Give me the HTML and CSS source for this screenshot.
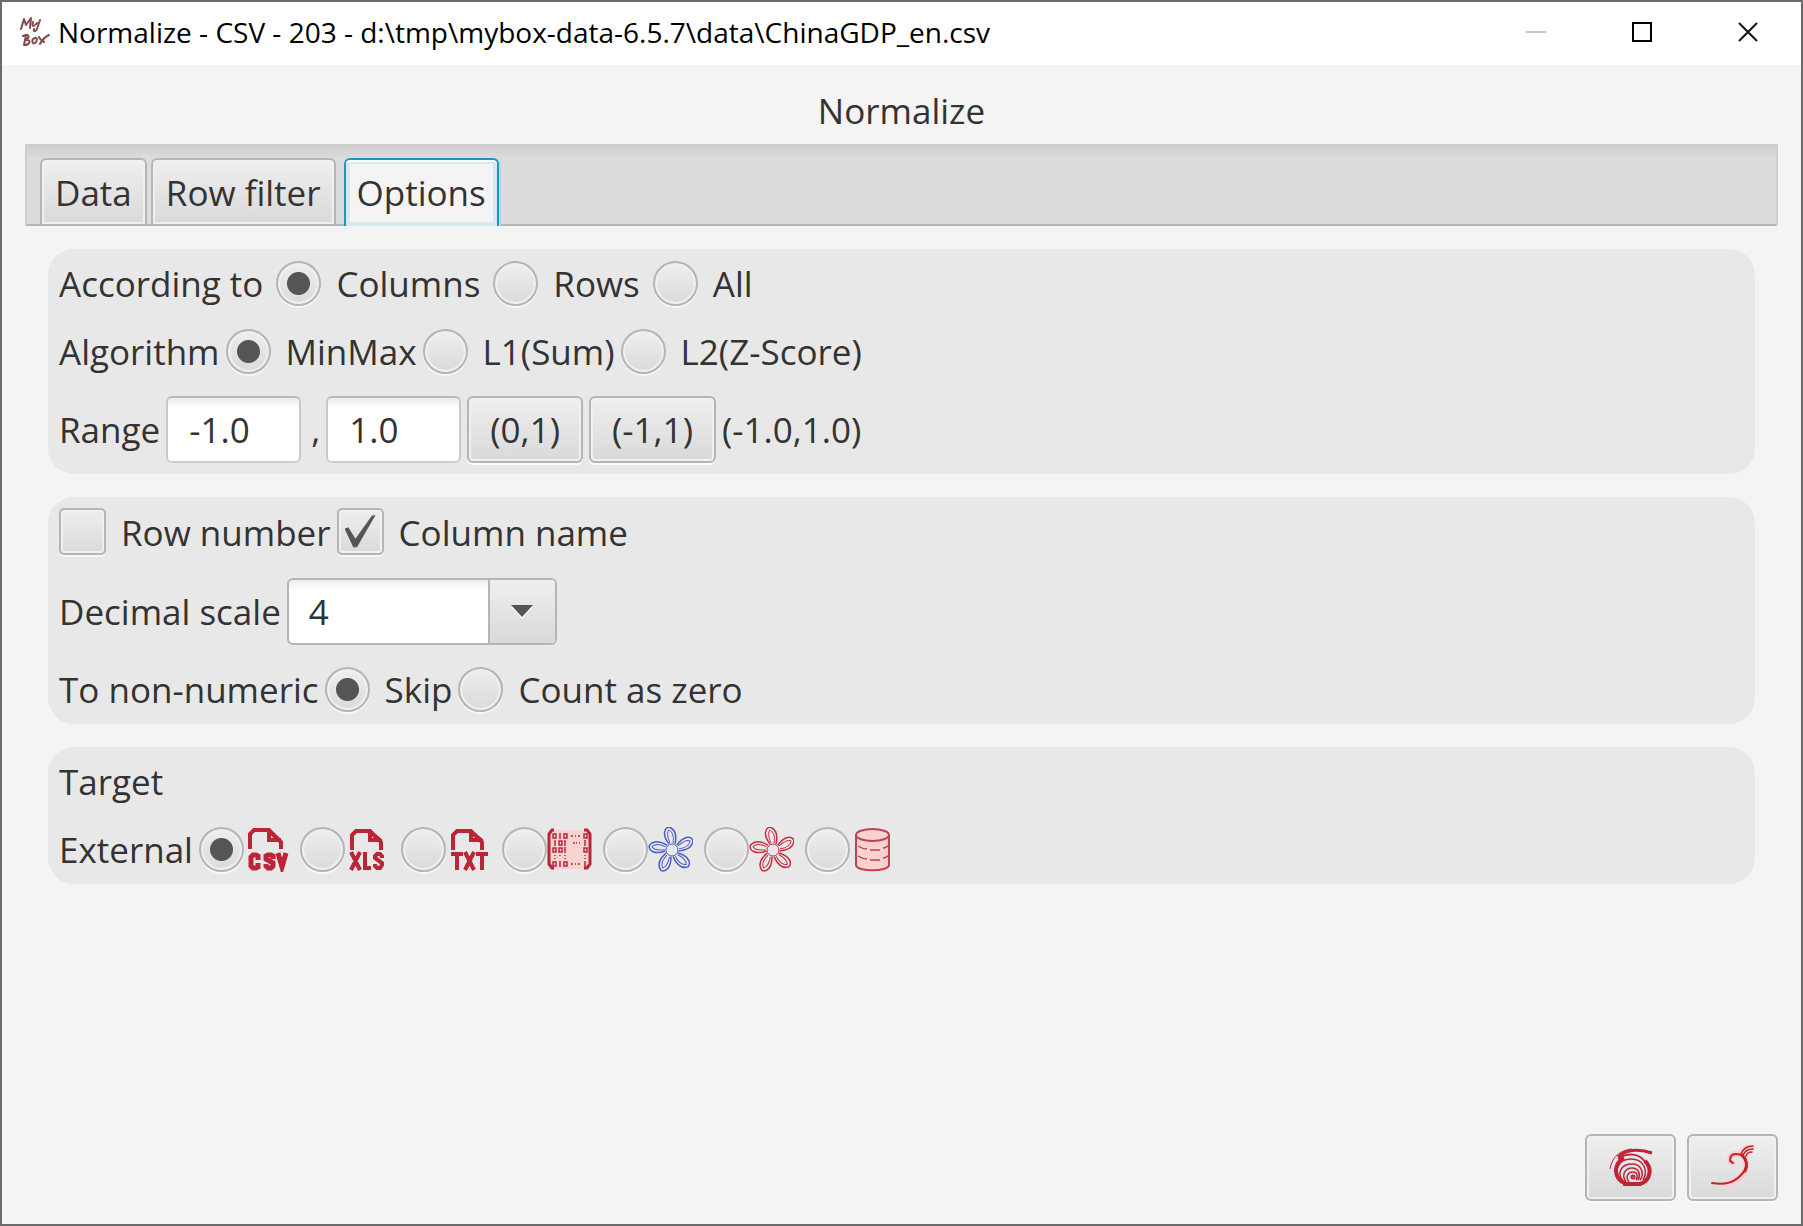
FILE: index.html
```html
<!DOCTYPE html>
<html lang="en">
<head>
<meta charset="utf-8">
<title>Normalize - CSV - 203</title>
<link rel="stylesheet" href="styles.css">
</head>
<body>
<div class="window">
  <header class="titlebar">
    <svg class="app-icon" viewBox="0 0 30 32" aria-hidden="true">
      <g fill="none" stroke="#83494b" stroke-width="2" stroke-linecap="round" stroke-linejoin="round">
        <path d="M1 13 4 3 6 9 11 2 10 12M13 6c-1 4 0 6 4 1M20 4l-3 9c-1 3-4 3-3 0"/>
        <path d="M6 19 4 29M3 20c7-3 7 2 2 4 7-1 5 5-1 5M15 22c-4 1-3 7 0 5s2-6 0-5M19 21c1 3 3 4 5 5M29 19c-4 2-7 5-9 9"/>
      </g>
    </svg>
    <span class="window-title">Normalize - CSV - 203 - d:\tmp\mybox-data-6.5.7\data\ChinaGDP_en.csv</span>
    <div class="window-controls">
      <button class="control" disabled aria-label="Minimize"><svg viewBox="0 0 20 20"><path d="M0 10h20" stroke="#c8c8c8" stroke-width="2"/></svg></button>
      <button class="control" aria-label="Maximize"><svg viewBox="0 0 20 20"><path d="M1 1h18v18H1z" fill="none" stroke="#000" stroke-width="2"/></svg></button>
      <button class="control" aria-label="Close"><svg viewBox="0 0 20 20"><path d="M1 1l18 18M19 1 1 19" stroke="#111" stroke-width="2"/></svg></button>
    </div>
  </header>

  <main class="content">
    <h1 class="heading">Normalize</h1>
    <div class="tabs" role="tablist">
      <button class="tab" role="tab">Data</button>
      <button class="tab" role="tab">Row filter</button>
      <button class="tab selected" role="tab" aria-selected="true">Options</button>
    </div>

    <div class="panels">
      <section class="panel">
        <div class="row wide">
          <span class="caption">According to</span>
          <label class="option"><input class="radio" type="radio" name="by" checked>Columns</label>
          <label class="option"><input class="radio" type="radio" name="by">Rows</label>
          <label class="option"><input class="radio" type="radio" name="by">All</label>
        </div>
        <div class="row">
          <span class="caption">Algorithm</span>
          <label class="option"><input class="radio" type="radio" name="algorithm" checked>MinMax</label>
          <label class="option"><input class="radio" type="radio" name="algorithm">L1(Sum)</label>
          <label class="option"><input class="radio" type="radio" name="algorithm">L2(Z-Score)</label>
        </div>
        <div class="row">
          <label for="from">Range</label>
          <input class="field" id="from" type="text" value="-1.0">
          <label class="comma" for="to">,</label>
          <input class="field" id="to" type="text" value="1.0">
          <button class="button">(0,1)</button>
          <button class="button">(-1,1)</button>
          <span>(-1.0,1.0)</span>
        </div>
      </section>

      <section class="panel">
        <div class="row">
          <label class="option"><input class="check" type="checkbox">Row number</label>
          <label class="option"><input class="check" type="checkbox" checked>Column name</label>
        </div>
        <div class="row">
          <label for="scale">Decimal scale</label>
          <div class="combo">
            <select id="scale"><option>4</option></select>
            <span class="arrow"><svg viewBox="0 0 22 14"><path d="M0 2h22L11 14z" fill="#fff"/><path d="M0 0h22L11 12z" fill="#555"/></svg></span>
          </div>
        </div>
        <div class="row">
          <span class="caption">To non-numeric</span>
          <label class="option"><input class="radio" type="radio" name="invalid" checked>Skip</label>
          <label class="option"><input class="radio" type="radio" name="invalid">Count as zero</label>
        </div>
      </section>

      <section class="panel">
        <div class="row">Target</div>
        <div class="row">
          <span class="caption">External</span>
          <label class="target"><input class="radio" type="radio" name="target" checked aria-label="CSV">
            <svg viewBox="0 0 45 45"><g fill="none" stroke="#be2438" stroke-width="4"><path d="M6 22V7l4-4h15l12 12v7"/><path d="M25 3v10h12M25 4l11 10" stroke-width="4"/><g stroke-width="5"><path d="M14 33v-4l-2-1H9l-2 2v9l2 2h3l2-1v-4M29 32v-3l-2-1h-3l-2 1v3l7 4v3l-2 2h-3l-2-2v-2M34 26l4 14 4-14"/></g></g></svg></label>
          <label class="target"><input class="radio" type="radio" name="target" aria-label="XLS">
            <svg viewBox="0 0 45 45"><g fill="none" stroke="#be2438" stroke-width="4"><path d="M7 23V8l4-4h14l11 11v8"/><path d="M25 4v9h11M25 5l11 9" stroke-width="4"/><path d="M6 25l9 18M15 25L6 43M20 25v16h6M37 31v-2l-2-2h-3l-2 2v2l7 5v2l-2 3h-3l-2-2v-2"/></g></svg></label>
          <label class="target"><input class="radio" type="radio" name="target" aria-label="TXT">
            <svg viewBox="0 0 45 45"><g fill="none" stroke="#be2438" stroke-width="4"><path d="M7 23V8l4-4h14l11 11v8"/><path d="M25 4v9h11M25 5l11 9" stroke-width="4"/><path d="M5 27h12M11 27v16M19 25l9 18M28 25l-9 18M30 27h12M36 27v16"/></g></svg></label>
          <label class="target"><input class="radio" type="radio" name="target" aria-label="Matrix">
            <svg viewBox="0 0 45 45"><path d="M1 3h42v39H1z" fill="#f9d3d0"/><g fill="none" stroke="#b5283a"><path d="M7 3H5L2 7v30l3 4h2M37 3h3l3 4v30l-3 4h-3" stroke-width="3"/><path stroke-width="1.500" d="M6 7h3v4H6zM13 6v6M17 7h3v4h-3zM24 9h2M28 9h1M31 9h2M37 7h3v4h-3zM8 13v6M12 14h3v4h-3zM18 13v6M26 16h2M29 16h1M32 16h1M38 13v6M6 21h3v4H6zM12 21h3v4h-3zM18 20v6M37 21h3v4h-3zM8 28v1M8 31v1M13 28v1M18 28v1M18 31v1M38 28v1M38 31v1M6 35h3v4H6zM13 34v6M17 35h3v4h-3zM24 37h2M28 37h1M31 37h2M38 34v6"/></g></svg></label>
          <label class="target"><input class="radio" type="radio" name="target" aria-label="Blue flower">
            <svg viewBox="0 0 45 45" color="#4c5fc9"><use href="#flower"/></svg></label>
          <label class="target"><input class="radio" type="radio" name="target" aria-label="Red flower">
            <svg viewBox="0 0 45 45" color="#c72c40"><use href="#flower"/></svg></label>
          <label class="target"><input class="radio" type="radio" name="target" aria-label="Database">
            <svg viewBox="0 0 45 45"><g fill="#fbd2cd" stroke="#bd4354" stroke-width="2"><path d="M6 8v30c0 7 33 7 33 0V8"/><ellipse cx="22.500" cy="8" rx="16.500" ry="6"/><path d="M8 19c3 2 6 3 9 3M20 23h10M33 21c2 0 3-1 5-2M8 29c3 2 6 3 9 3M20 33h10M33 31c2 0 3-1 5-2" fill="none" stroke-width="1.500"/></g></svg></label>
        </div>
      </section>
    </div>

    <footer class="actions">
      <button class="button action" aria-label="Shell">
        <svg viewBox="0 0 45 45"><g fill="none" stroke="#be2438"><path d="M2 24C4 12 12 5 24 4" stroke-width="1"/><path d="M10 12C17 5 30 3 44 8" stroke-width="3"/><path d="M37 16c8 8 5 20-5 23H18C5 34 5 18 16 13" stroke-width="4"/><path d="M10 14C19 7 32 8 38 18" stroke-width="2"/><path d="M12 35C5 25 11 14 23 14c12 0 18 11 12 21M15 36C8 27 14 19 24 19c9 0 13 9 8 16M18 37c-5-7-1-14 6-14 7 0 9 7 6 12M21 37c-4-5-1-10 4-10 5 0 5 5 3 8" stroke-width="1.500"/><circle cx="25" cy="32" r="1.500" stroke-width="2"/><path d="M15 39h18" stroke-width="4"/></g></svg>
      </button>
      <button class="button action" aria-label="Start">
        <svg viewBox="0 0 45 45"><g fill="none" stroke-linecap="round"><path d="M23 18c-5-2-3-9 3-9 12 0 14 14 4 23-5 4-9 6-14 7M31 9c2-4 6-7 11-7" stroke="#f9d0cc" stroke-width="6"/><path d="M2 38c13 2 21 0 28-7C40 22 38 9 26 9c-6 0-8 7-3 9" stroke="#c4202f" stroke-width="2"/><path d="M32 10c5 5 6 10 3 16" stroke="#c4202f" stroke-width="3"/><path d="M31 9c2-5 5-8 12-8M33 10c2-4 5-6 10-6M36 11c1-3 3-4 6-4" stroke="#c4202f" stroke-width="1.500"/></g></svg>
      </button>
    </footer>
  </main>
</div>

<svg class="defs" aria-hidden="true">
  <symbol id="flower" viewBox="0 0 45 45">
    <g fill="none" stroke="currentColor" stroke-width="1">
      <circle cx="24" cy="23" r="6"/>
      <g id="petal"><path d="M21 17C14 8 16 1 21 0c6 2 8 8 6 17" stroke-width="1.500"/><path d="M22 16c-3-7-3-11-1-13 4 2 5 7 4 13"/></g>
      <use href="#petal" transform="rotate(72 24 23)"/>
      <use href="#petal" transform="rotate(144 24 23)"/>
      <use href="#petal" transform="rotate(216 24 23)"/>
      <use href="#petal" transform="rotate(288 24 23)"/>
    </g>
  </symbol>
</svg>
</body>
</html>
```

FILE: styles.css
```css
* { box-sizing: border-box; }

body {
  margin: 0;
  font-family: "Open Sans", "Noto Sans", sans-serif;
  font-size: 35px;
  line-height: 46px;
  color: #333;
}

button, input, select { font: inherit; color: inherit; margin: 0; }

.window {
  display: flex;
  flex-direction: column;
  min-height: 100vh;
  border: 2px solid #6b6b6b;
  background: #f4f4f4;
}

.titlebar {
  display: flex;
  align-items: center;
  height: 63px;
  padding: 0 0 3px 18px;
  background: #fff;
  color: #000;
}
.app-icon { width: 30px; height: 32px; margin-right: 8px; }
.window-title { flex: 1; font-size: 28px; white-space: nowrap; }
.window-controls { display: flex; }
.control {
  display: flex;
  align-items: center;
  justify-content: center;
  width: 106px;
  height: 60px;
  padding: 0;
  border: 0;
  background: none;
}
.control svg { width: 20px; height: 20px; }

.content {
  display: flex;
  flex: 1;
  flex-direction: column;
  padding: 23px;
}
.heading {
  margin: 0 0 10px;
  font-size: inherit;
  font-weight: 400;
  text-align: center;
}

.tabs {
  display: flex;
  align-items: flex-end;
  gap: 4px;
  height: 82px;
  padding: 0 13px;
  border: solid #cfcfcf;
  border-width: 0 2px;
  background: linear-gradient(#b5b5b5, #b5b5b5) bottom / 100% 2px no-repeat,
    linear-gradient(#cbcbcb, #dcdcdc 14px);
}
.tab {
  height: 68px;
  padding: 2px 13px 0;
  border: 2px solid #b5b5b5;
  border-radius: 6px 6px 0 0;
  background: linear-gradient(#efefef, #d9d9d9);
  box-shadow: inset 0 0 0 2px #f0f0f0;
}
.tab.selected {
  margin-left: 4px;
  padding: 0 11px;
  border-color: #1f96bd;
  border-bottom: 0;
  background: #f4f4f4;
  box-shadow: inset 0 2px #fff, inset 0 0 0 4px #d8e8ef, 2px 0 0 #b5d8e4;
}

.panels {
  display: flex;
  flex-direction: column;
  gap: 23px;
  padding: 23px;
}
.panel {
  display: flex;
  flex-direction: column;
  gap: 21px;
  padding: 11px;
  border-radius: 26px;
  background: #e8e8e8;
}
.row, .option, .target { display: flex; align-items: center; }
.row { gap: 6px; min-height: 47px; white-space: nowrap; }
.row.wide { gap: 13px; }
.option { gap: 15px; }
.comma { padding-left: 4px; }

.radio, .check {
  appearance: none;
  width: 45px;
  height: 45px;
  border: 2px solid #b5b5b5;
  border-radius: 50%;
  background: linear-gradient(#eee, #dadada);
  box-shadow: inset 0 0 0 2px #f0f0f0, 0 2px 0 #f8f8f8;
}
.radio:checked {
  background: radial-gradient(circle, #555 11px, transparent 12px),
    linear-gradient(#eee, #dadada);
}
.check {
  display: grid;
  place-items: center;
  width: 47px;
  height: 47px;
  margin-bottom: 2px;
  border-radius: 5px;
}
.check:checked::after {
  content: "";
  width: 31px;
  height: 33px;
  background: #555;
  clip-path: polygon(0 42%, 12% 37%, 35% 72%, 88% 2%, 100% 0, 40% 98%, 28% 98%);
}

.field, .button, .combo {
  height: 67px;
  border: 2px solid #b5b5b5;
  border-radius: 6px;
}
.field {
  width: 135px;
  padding: 0 21px;
  border-color: #b9b9b9 #c8c8c8 #cdcdcd;
  background: linear-gradient(#ececec, #fff 10px);
}
.button {
  padding: 0 21px;
  background: linear-gradient(#efefef, #d9d9d9);
  box-shadow: inset 0 0 0 2px #f0f0f0, 0 2px 0 #fafafa;
}
.combo {
  display: grid;
  grid-template-columns: 1fr 67px;
  width: 270px;
  overflow: hidden;
  background: linear-gradient(#ececec, #fff 10px);
}
.combo select {
  grid-area: 1 / 1 / 2 / 3;
  appearance: none;
  padding: 0 20px;
  border: 0;
  background: none;
}
.arrow {
  display: grid;
  grid-area: 1 / 2;
  place-items: center;
  border-left: 2px solid #b5b5b5;
  background: linear-gradient(#efefef, #d9d9d9);
  pointer-events: none;
}
.arrow svg { width: 22px; height: 14px; }

.target svg { width: 45px; height: 45px; margin-right: 5px; }

.actions {
  display: flex;
  justify-content: flex-end;
  gap: 11px;
  margin-top: auto;
}
.action {
  display: flex;
  align-items: center;
  justify-content: center;
  width: 91px;
  padding: 0;
}
.action svg { width: 45px; height: 45px; }
.defs { display: none; }
```
